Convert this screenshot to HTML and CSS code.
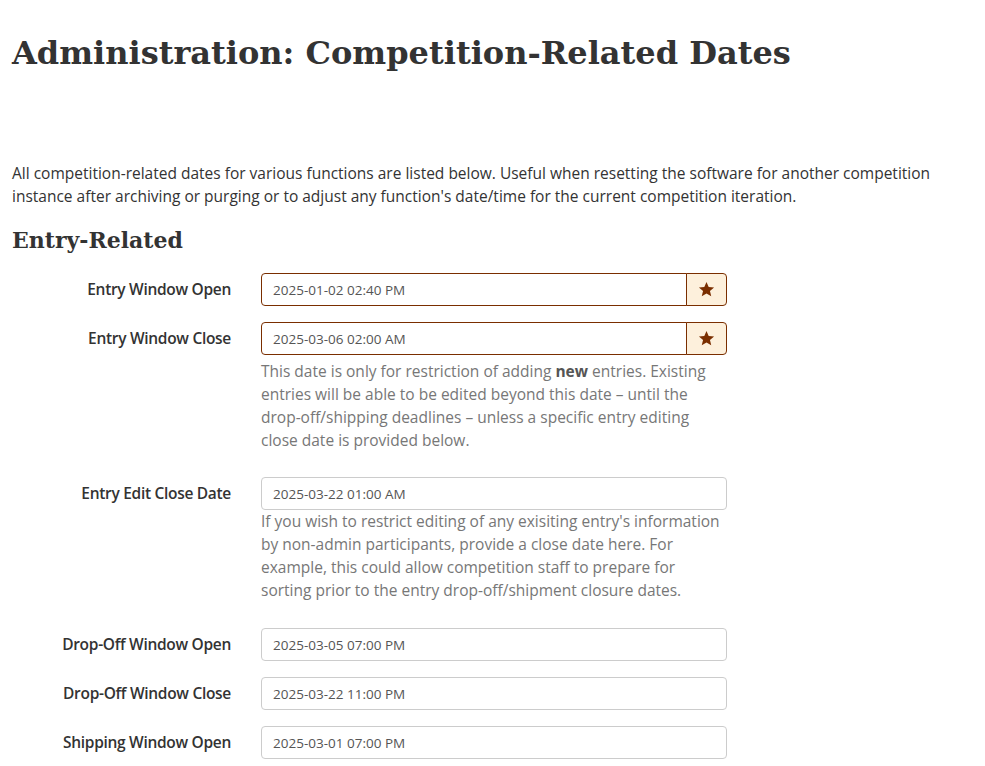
FILE: index.html
```html
<!DOCTYPE html>
<html lang="en">
<head>
    <meta charset="UTF-8">
    <meta name="viewport" content="width=device-width, initial-scale=1.0">
    <title>Competition-Related Dates</title>
    <link rel="stylesheet" href="styles.css">
</head>
<body>
    <div id="pageContainer">
        <h1 class="pageTitle">Administration: Competition-Related Dates</h1>
        <p class="lead">All competition-related dates for various functions are listed below. Useful when resetting the software for another competition instance after archiving or purging or to adjust any function's date/time for the current competition iteration.</p>

        <h2 class="sectionTitle">Entry-Related</h2>

        <div class="formRow">
            <label class="formLabel">Entry Window Open</label>
            <div class="formField">
                <div class="inputGroup">
                    <input class="formInput" type="text" value="2025-01-02 02:40 PM">
                    <span class="inputAddon">
                        <svg width="17" height="17" viewBox="0 0 24 24"><path d="M12 1.5l3.1 7.1 7.6.6-5.8 5 1.8 7.5L12 17.7l-6.7 4 1.8-7.5-5.8-5 7.6-.6z" fill="#7a2e00"/></svg>
                    </span>
                </div>
            </div>
        </div>

        <div class="formRow">
            <label class="formLabel">Entry Window Close</label>
            <div class="formField">
                <div class="inputGroup">
                    <input class="formInput" type="text" value="2025-03-06 02:00 AM">
                    <span class="inputAddon">
                        <svg width="17" height="17" viewBox="0 0 24 24"><path d="M12 1.5l3.1 7.1 7.6.6-5.8 5 1.8 7.5L12 17.7l-6.7 4 1.8-7.5-5.8-5 7.6-.6z" fill="#7a2e00"/></svg>
                    </span>
                </div>
                <p class="helpText">This date is only for restriction of adding <strong>new</strong> entries. Existing entries will be able to be edited beyond this date &ndash; until the drop-off/shipping deadlines &ndash; unless a specific entry editing close date is provided below.</p>
            </div>
        </div>

        <div class="formRow">
            <label class="formLabel">Entry Edit Close Date</label>
            <div class="formField">
                <input class="formInput plain" type="text" value="2025-03-22 01:00 AM">
                <p class="helpText">If you wish to restrict editing of any exisiting entry's information by non-admin participants, provide a close date here. For example, this could allow competition staff to prepare for sorting prior to the entry drop-off/shipment closure dates.</p>
            </div>
        </div>

        <div class="formRow">
            <label class="formLabel">Drop-Off Window Open</label>
            <div class="formField">
                <input class="formInput plain" type="text" value="2025-03-05 07:00 PM">
            </div>
        </div>

        <div class="formRow">
            <label class="formLabel">Drop-Off Window Close</label>
            <div class="formField">
                <input class="formInput plain" type="text" value="2025-03-22 11:00 PM">
            </div>
        </div>

        <div class="formRow">
            <label class="formLabel">Shipping Window Open</label>
            <div class="formField">
                <input class="formInput plain" type="text" value="2025-03-01 07:00 PM">
            </div>
        </div>
    </div>
</body>
</html>
```

FILE: styles.css
```css
body{
    margin: 0;
    font-family: "Open Sans", "Noto Sans", sans-serif;
    color: #333;
    background: #fff;
}
#pageContainer{
    padding: 0 12px;
}
.pageTitle{
    font-family: "DejaVu Serif", serif;
    font-size: 32px;
    font-weight: bold;
    margin: 29px 0 0;
    line-height: 48px;
}
.lead{
    font-size: 15.5px;
    line-height: 23px;
    margin: 85px 0 0;
}
.sectionTitle{
    font-family: "DejaVu Serif", serif;
    font-size: 22px;
    font-weight: bold;
    margin: 16px 0 17px;
    line-height: 32px;
}
.formRow{
    display: grid;
    grid-template-columns: 219px 466px;
    column-gap: 30px;
    margin-bottom: 16px;
}
.formLabel{
    text-align: right;
    font-weight: 600;
    font-size: 15.5px;
    letter-spacing: -0.3px;
    line-height: 33px;
}
.inputGroup{
    display: flex;
}
.formInput{
    box-sizing: border-box;
    display: block;
    width: 100%;
    height: 33px;
    padding: 0 11px;
    font-family: "Open Sans", sans-serif;
    font-size: 13.5px;
    color: #555;
    border: 1px solid #7a2e00;
    border-radius: 4px 0 0 4px;
    outline: none;
}
.formInput.plain{
    border: 1px solid #ccc;
    border-radius: 4px;
}
.inputAddon{
    display: flex;
    align-items: center;
    justify-content: center;
    width: 41px;
    flex: none;
    box-sizing: border-box;
    background: #fdf0dc;
    border: 1px solid #7a2e00;
    border-radius: 0 4px 4px 0;
    margin-left: -1px;
}
.helpText{
    margin: 0 0 10px;
    font-size: 15.5px;
    line-height: 23px;
    color: #777;
}
.inputGroup + .helpText{
    margin: 5px 0 9px;
}
.helpText strong{
    color: #555;
}
```
